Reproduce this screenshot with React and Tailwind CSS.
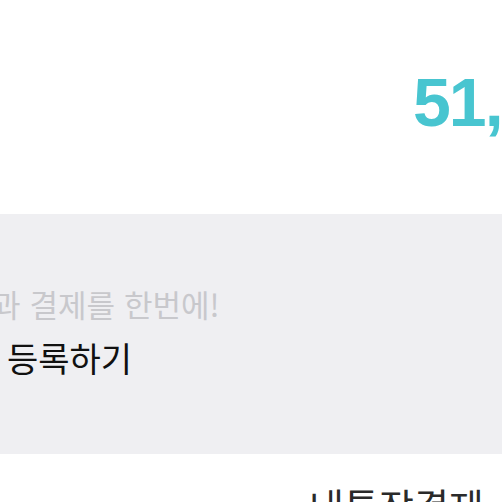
import React from 'react';

const KR = "font-['Noto_Sans_CJK_KR','Noto_Sans',sans-serif]";

export default function App() {
  return (
    <div className={`w-[502px] h-[502px] overflow-hidden bg-white ${KR}`}>
      {/* amount */}
      <div className="h-[214px] flex justify-start pl-[413px] pt-[62px]">
        <span className="font-['Liberation_Sans',sans-serif] font-bold text-[68px] leading-[80px] tracking-[-2px] text-[#48c5d0] whitespace-nowrap">
          51,<span className="ml-[10px]">000원</span>
        </span>
      </div>

      {/* account banner */}
      <div className="h-[240px] bg-[#efeff2] flex flex-col pt-[70px]">
        <p className="ml-[-8px] text-[31px] leading-[40px] [word-spacing:2px] text-[#c8c8cc] whitespace-nowrap">
          과 결제를 한번에!
        </p>
        <p className="ml-[7px] mt-[12px] text-[34px] leading-[44px] text-[#111] whitespace-nowrap">
          등록하기
        </p>
      </div>

      {/* payment method */}
      <div className="pl-[309px] pt-[31px]">
        <span className="text-[38px] leading-[40px] text-[#2a2a2a] whitespace-nowrap">내통장결제</span>
      </div>
    </div>
  );
}
